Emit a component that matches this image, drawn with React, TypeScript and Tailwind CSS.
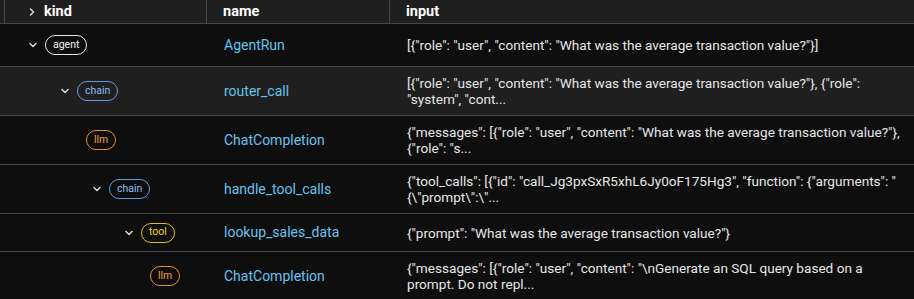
import React from 'react';

type Kind = 'agent' | 'chain' | 'llm' | 'tool';

interface SpanRow {
  kind: Kind;
  name: string;
  input: string[];
  depth: number;
  expandable: boolean;
  height: string;
  highlight?: boolean;
}

const badgeStyles: Record<Kind, string> = {
  agent: 'border-[#e6e6e6] text-[#f2f2f2]',
  chain: 'border-[#5f9ddf] text-[#8cbcef]',
  llm: 'border-[#ec8a25] text-[#f39a3d]',
  tool: 'border-[#e2c00f] text-[#ecd02a]',
};

// indentation per depth, written out so tailwind picks them up
const indent: Record<string, string> = {
  '0-true': 'pl-[28px]',
  '1-true': 'pl-[60px]',
  '2-false': 'pl-[86px]',
  '2-true': 'pl-[92px]',
  '3-true': 'pl-[124px]',
  '4-false': 'pl-[150px]',
};

const rows: SpanRow[] = [
  {
    kind: 'agent',
    name: 'AgentRun',
    input: ['[{"role": "user", "content": "What was the average transaction value?"}]'],
    depth: 0,
    expandable: true,
    height: 'h-[43px]',
  },
  {
    kind: 'chain',
    name: 'router_call',
    input: [
      '[{"role": "user", "content": "What was the average transaction value?"}, {"role":',
      '"system", "cont...',
    ],
    depth: 1,
    expandable: true,
    height: 'h-[49px]',
    highlight: true,
  },
  {
    kind: 'llm',
    name: 'ChatCompletion',
    input: [
      '{"messages": [{"role": "user", "content": "What was the average transaction value?"},',
      '{"role": "s...',
    ],
    depth: 2,
    expandable: false,
    height: 'h-[49px]',
  },
  {
    kind: 'chain',
    name: 'handle_tool_calls',
    input: [
      '{"tool_calls": [{"id": "call_Jg3pxSxR5xhL6Jy0oF175Hg3", "function": {"arguments": "',
      '{\\"prompt\\":\\"...',
    ],
    depth: 2,
    expandable: true,
    height: 'h-[49px]',
  },
  {
    kind: 'tool',
    name: 'lookup_sales_data',
    input: ['{"prompt": "What was the average transaction value?"}'],
    depth: 3,
    expandable: true,
    height: 'h-[38px]',
  },
  {
    kind: 'llm',
    name: 'ChatCompletion',
    input: [
      '{"messages": [{"role": "user", "content": "\\nGenerate an SQL query based on a',
      'prompt. Do not repl...',
    ],
    depth: 4,
    expandable: false,
    height: 'h-[49px]',
  },
];

const Chevron = ({ open }: { open: boolean }) => (
  <svg
    width="10"
    height="10"
    viewBox="0 0 10 10"
    fill="none"
    stroke="#d6d6d6"
    strokeWidth="1.6"
    strokeLinecap="round"
    strokeLinejoin="round"
    className="shrink-0"
  >
    {open ? <path d="M2 3.5 L5 6.5 L8 3.5" /> : <path d="M3.5 2 L6.5 5 L3.5 8" />}
  </svg>
);

export default function App() {
  return (
    <div
      className="w-[914px] h-[299px] overflow-hidden bg-[#0e0e0f] text-[#e8e8e8]"
      style={{ fontFamily: 'Roboto, "Liberation Sans", sans-serif' }}
    >
      {/* header */}
      <div className="flex h-[24px] bg-[#1f1f1f] border-b border-[#474747]">
        <div className="w-[5px] border-r border-[#474747]" />
        <div className="w-[202px] flex items-center gap-[7px] pl-[22px] border-r border-[#474747]">
          <Chevron open={false} />
          <span className="text-[14.5px] font-bold text-white">kind</span>
        </div>
        <div className="w-[183px] flex items-center pl-[16px] border-r border-[#474747]">
          <span className="text-[14.5px] font-bold text-white">name</span>
        </div>
        <div className="flex-1 flex items-center pl-[16px]">
          <span className="text-[14.5px] font-bold text-white">input</span>
        </div>
      </div>

      {rows.map((row, i) => (
        <div
          key={i}
          className={`flex items-center border-b border-[#474747] ${row.height} ${
            row.highlight ? 'bg-[#1f1f1f]' : 'bg-[#0e0e0f]'
          }`}
        >
          <div className={`w-[207px] flex items-center gap-[7px] ${indent[`${row.depth}-${row.expandable}`]}`}>
            {row.expandable && <Chevron open />}
            <span
              className={`h-[20px] px-[7px] flex items-center rounded-full border text-[10.5px] leading-none ${badgeStyles[row.kind]}`}
            >
              {row.kind}
            </span>
          </div>
          <div className="w-[183px] pl-[17px] text-[14px] text-[#66c3ee]">{row.name}</div>
          <div className="flex-1 pl-[17px] text-[13.6px] leading-[16px] text-[#e6e6e6] whitespace-nowrap">
            {row.input.map((line, j) => (
              <div key={j}>{line}</div>
            ))}
          </div>
        </div>
      ))}
    </div>
  );
}
